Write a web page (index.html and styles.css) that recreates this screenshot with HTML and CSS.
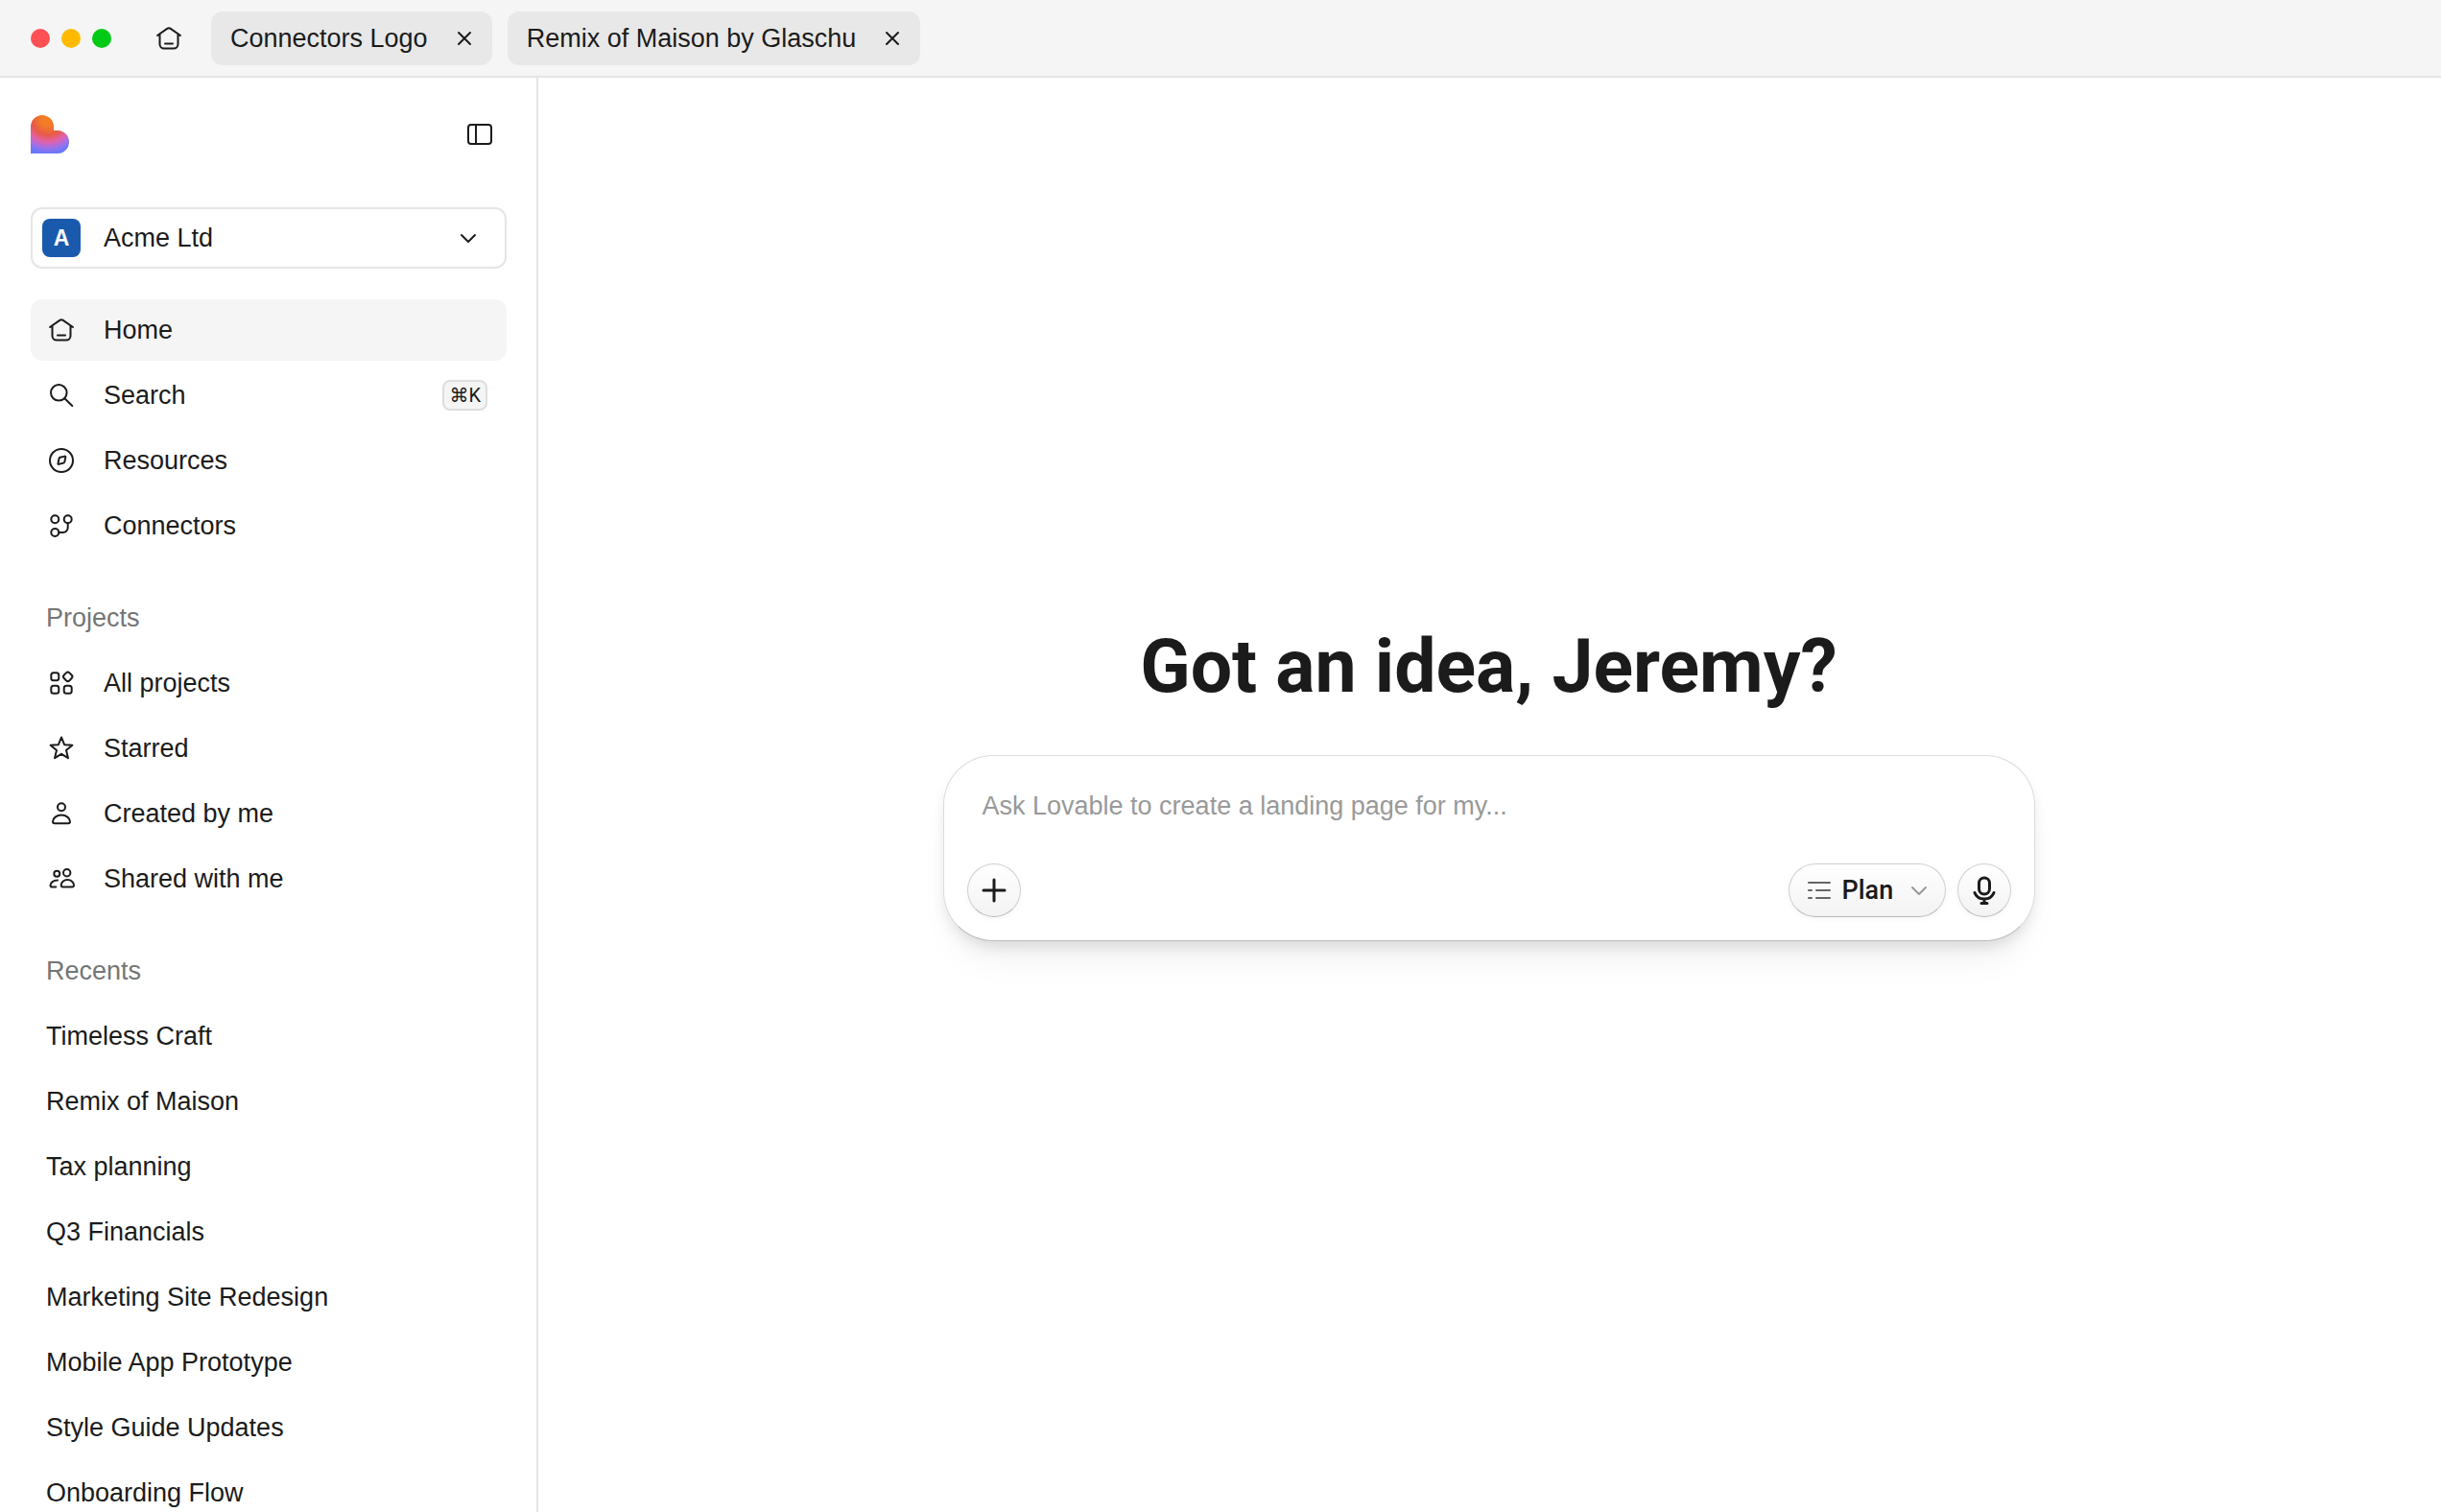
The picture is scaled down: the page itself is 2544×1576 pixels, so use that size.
FILE: index.html
```html
<!DOCTYPE html>
<html lang="en">

<head>
  <meta charset="UTF-8">
  <meta name="viewport" content="width=device-width, initial-scale=1.0">
  <title>Lovable</title>
  <link rel="stylesheet" href="styles.css">
</head>

<body>
  <header class="titlebar">
    <div class="lights">
      <span class="light red"></span>
      <span class="light yellow"></span>
      <span class="light green"></span>
    </div>
    <button class="icon-button home-button" aria-label="Home">
      <svg class="icon" viewBox="0 0 32 32"><path d="M4 13 14.2 5.9Q16 4.7 17.8 5.9L28 13M6.5 11.5V22a4.5 4.5 0 0 0 4.5 4.5h10a4.5 4.5 0 0 0 4.5-4.5V11.5M12 21.5h8"/></svg>
    </button>
    <div class="tabs">
      <div class="tab">
        <a href="#">Connectors Logo</a>
        <button class="icon-button" aria-label="Close Connectors Logo">
          <svg class="icon-small" viewBox="0 0 20 20"><path d="M4 4l12 12M16 4L4 16"/></svg>
        </button>
      </div>
      <div class="tab">
        <a href="#">Remix of Maison by Glaschu</a>
        <button class="icon-button" aria-label="Close Remix of Maison">
          <svg class="icon-small" viewBox="0 0 20 20"><path d="M4 4l12 12M16 4L4 16"/></svg>
        </button>
      </div>
    </div>
  </header>

  <div class="layout">
    <aside class="sidebar">
      <div class="sidebar-top">
        <svg class="logo" viewBox="0 0 40 40" role="img" aria-label="Lovable">
          <defs>
            <radialGradient id="heart" gradientUnits="userSpaceOnUse" cx="18" cy="4" r="42">
              <stop offset="0" stop-color="#f5801f"/>
              <stop offset="0.18" stop-color="#f27a28"/>
              <stop offset="0.4" stop-color="#e85a48"/>
              <stop offset="0.58" stop-color="#e062b0"/>
              <stop offset="0.72" stop-color="#a070e8"/>
              <stop offset="0.85" stop-color="#6a78f8"/>
            </radialGradient>
          </defs>
          <path fill="url(#heart)" d="M0 12a12 12 0 0 1 24 0v4h4a12 12 0 0 1 0 24H0z"/>
        </svg>
        <button class="icon-button" aria-label="Toggle sidebar">
          <svg class="icon" viewBox="0 0 32 32"><rect x="4" y="6" width="24" height="20" rx="3"/><path d="M12 6v20"/></svg>
        </button>
      </div>

      <div class="workspace">
        <span class="avatar">A</span>
        <select aria-label="Workspace">
          <option>Acme Ltd</option>
        </select>
        <svg class="icon-small" viewBox="0 0 20 20"><path d="M3 7l7 7 7-7"/></svg>
      </div>

      <nav class="menu">
        <a href="#" class="item active">
          <svg class="icon" viewBox="0 0 32 32"><path d="M4 13 14.2 5.9Q16 4.7 17.8 5.9L28 13M6.5 11.5V22a4.5 4.5 0 0 0 4.5 4.5h10a4.5 4.5 0 0 0 4.5-4.5V11.5M12 21.5h8"/></svg>
          Home
        </a>
        <a href="#" class="item">
          <svg class="icon" viewBox="0 0 32 32"><circle cx="13.3" cy="13.3" r="8.3"/><path d="M19.3 19.3l8 7.7"/></svg>
          Search
          <kbd>⌘K</kbd>
        </a>
        <a href="#" class="item">
          <svg class="icon" viewBox="0 0 32 32"><circle cx="16" cy="16" r="12"/><path d="M13.6 13.7q.2-.8 1-1l4.8-1.1q1-.2.9.8l-1 5.1q-.2.8-1 1l-5 1.4q-1 .2-.8-.8z"/></svg>
          Resources
        </a>
        <a href="#" class="item">
          <svg class="icon" viewBox="0 0 32 32"><circle cx="9.3" cy="9.3" r="4"/><circle cx="22.7" cy="9.3" r="4"/><circle cx="9.3" cy="23" r="4"/><path d="M22.7 13.3v4.7a5 5 0 0 1-5 5h-4.4"/></svg>
          Connectors
        </a>
      </nav>

      <nav class="menu">
        <h2>Projects</h2>
        <a href="#" class="item">
          <svg class="icon" viewBox="0 0 32 32"><rect x="5.3" y="5.3" width="8" height="8" rx="2.5"/><rect x="18.7" y="5.3" width="8" height="8" rx="2.5" transform="rotate(45 22.7 9.3)"/><rect x="5.3" y="18.7" width="8" height="8" rx="2.5"/><rect x="18.7" y="18.7" width="8" height="8" rx="2.5"/></svg>
          All projects
        </a>
        <a href="#" class="item">
          <svg class="icon" viewBox="0 0 32 32"><path d="M16 4.500l3.100 7.700 8.300.6-6.400 5.300 2 8.100-7-4.400-7 4.400 2-8.100-6.400-5.300 8.300-.6z"/></svg>
          Starred
        </a>
        <a href="#" class="item">
          <svg class="icon" viewBox="0 0 32 32"><circle cx="16" cy="9.3" r="4"/><path d="M16 17.500c-5 0-9 3.300-9 7 0 1.300.8 1.800 2 1.800h14c1.200 0 2-.5 2-1.800 0-3.700-4-7-9-7z"/></svg>
          Created by me
        </a>
        <a href="#" class="item">
          <svg class="icon" viewBox="0 0 32 32"><circle cx="11.3" cy="10.7" r="3"/><circle cx="21.7" cy="9.8" r="3.7"/><path d="M22.300 17c-3.700 0-6.600 2.700-6.600 5.600 0 1.200.7 1.900 1.800 1.900h9.700c1.100 0 1.800-.7 1.800-1.900 0-2.900-3-5.600-6.700-5.600zM12 17.500c-4.300 0-7.500 2.500-7.500 5.200 0 1.200.7 1.800 1.800 1.800h4"/></svg>
          Shared with me
        </a>
      </nav>

      <nav class="menu">
        <h2>Recents</h2>
        <a href="#" class="item">Timeless Craft</a>
        <a href="#" class="item">Remix of Maison</a>
        <a href="#" class="item">Tax planning</a>
        <a href="#" class="item">Q3 Financials</a>
        <a href="#" class="item">Marketing Site Redesign</a>
        <a href="#" class="item">Mobile App Prototype</a>
        <a href="#" class="item">Style Guide Updates</a>
        <a href="#" class="item">Onboarding Flow</a>
      </nav>
    </aside>

    <main class="main">
      <h1>Got an idea, Jeremy?</h1>
      <form class="composer">
        <textarea aria-label="Prompt" placeholder="Ask Lovable to create a landing page for my..."></textarea>
        <div class="actions">
          <button type="button" class="round" aria-label="Add">
            <svg class="icon" viewBox="0 0 32 32"><path d="M16 5v22M5 16h22"/></svg>
          </button>
          <div class="plan">
            <svg class="icon plan-icon" viewBox="0 0 32 32"><path d="M5 8h22M5 16h3M13 16h14M5 24h3M13 24h14"/></svg>
            <select aria-label="Mode">
              <option>Plan</option>
            </select>
            <svg class="icon-small plan-arrow" viewBox="0 0 20 20"><path d="M3 7l7 7 7-7"/></svg>
          </div>
          <button type="button" class="round" aria-label="Dictate">
            <svg class="icon" viewBox="0 0 32 32"><rect x="10.5" y="3" width="11" height="17" rx="5.5"/><path d="M6 18.500c1.500 4 5.300 6.500 10 6.500s8.500-2.500 10-6.500M16 25v4.500M13 29.500h6"/></svg>
          </button>
        </div>
      </form>
    </main>
  </div>
</body>

</html>
```
FILE: styles.css
```css
* {
  box-sizing: border-box;
}

body {
  margin: 0;
  height: 100vh;
  display: flex;
  flex-direction: column;
  overflow: hidden;
  background: #fff;
  color: #1b1b1b;
  font-family: "Liberation Sans", Arial, sans-serif;
  font-size: 27px;
  line-height: 32px;
}

a {
  color: inherit;
  text-decoration: none;
}

button,
select,
textarea {
  font: inherit;
  color: inherit;
}

.icon,
.icon-small {
  display: block;
  flex: none;
  width: 32px;
  height: 32px;
  fill: none;
  stroke: currentColor;
  stroke-width: 2;
  stroke-linecap: round;
  stroke-linejoin: round;
}

.icon-small {
  width: 20px;
  height: 20px;
}

.icon-button {
  padding: 0;
  border: none;
  background: none;
  cursor: pointer;
}

/* Title bar */
.titlebar {
  flex: none;
  display: flex;
  align-items: center;
  height: 81px;
  padding: 0 32px;
  background: #f5f5f5;
  border-bottom: 2px solid #e5e5e5;
}

.lights {
  display: flex;
  gap: 12px;
}

.light {
  width: 20px;
  height: 20px;
  border-radius: 50%;
}

.red {
  background: #ff5056;
}

.yellow {
  background: #ffba00;
}

.green {
  background: #00ca16;
}

.home-button {
  margin: 0 28px 0 44px;
}

.tabs {
  display: flex;
  gap: 16px;
}

.tab {
  display: flex;
  align-items: center;
  gap: 28px;
  height: 56px;
  padding: 0 19px 0 20px;
  border-radius: 12px;
  background: #e8e8e8;
}

/* Sidebar */
.layout {
  flex: 1;
  display: flex;
  min-height: 0;
}

.sidebar {
  flex: none;
  display: flex;
  flex-direction: column;
  gap: 32px;
  width: 561px;
  padding: 39px 31px 0 32px;
  border-right: 2px solid #e5e5e5;
  overflow: hidden;
}

.sidebar-top {
  display: flex;
  justify-content: space-between;
  align-items: center;
  padding-right: 12px;
  margin-bottom: 24px;
}

.logo {
  width: 40px;
  height: 40px;
}

.workspace {
  flex: none;
  display: flex;
  align-items: center;
  height: 64px;
  padding: 0 28px 0 10px;
  border: 2px solid #e5e5e5;
  border-radius: 12px;
}

.avatar {
  width: 40px;
  height: 40px;
  margin-right: 24px;
  border-radius: 8px;
  background: #1a5aad;
  color: #fff;
  font-size: 23px;
  font-weight: 700;
  line-height: 40px;
  text-align: center;
}

select {
  appearance: none;
  padding: 0;
  border: none;
  background: none;
  cursor: pointer;
}

.workspace select {
  flex: 1;
}

.menu {
  display: flex;
  flex-direction: column;
  gap: 4px;
}

.menu h2 {
  margin: 0;
  padding: 16px;
  color: #757575;
  font-size: 27px;
  font-weight: 400;
}

.item {
  display: flex;
  align-items: center;
  gap: 28px;
  height: 64px;
  padding: 0 20px 0 16px;
  border-radius: 12px;
}

.active {
  background: #f5f5f5;
}

kbd {
  margin-left: auto;
  padding: 0 5px;
  border: 2px solid #dedede;
  border-radius: 8px;
  background: #f5f5f5;
  font-family: Roboto, "DejaVu Sans", sans-serif;
  font-size: 20px;
  line-height: 28px;
}

/* Prompt */
.main {
  flex: 1;
  display: flex;
  flex-direction: column;
  align-items: center;
  justify-content: center;
  gap: 48px;
  padding: 0 32px 26px 30px;
}

h1 {
  margin: 0;
  font-family: Roboto, sans-serif;
  font-size: 77px;
  font-weight: 700;
  line-height: 88px;
}

.composer {
  width: 100%;
  max-width: 1138px;
  padding: 24px;
  border: 1px solid #dcdcdc;
  border-bottom-color: #bdbdbd;
  border-radius: 52px;
  background: #fff;
  box-shadow: 0 8px 16px -4px rgba(0, 0, 0, 0.12), 0 28px 40px -16px rgba(0, 0, 0, 0.08);
}

textarea {
  display: block;
  width: 100%;
  height: 88px;
  padding: 12px 16px;
  border: none;
  outline: none;
  resize: none;
  background: none;
}

textarea::placeholder {
  color: #999;
  opacity: 1;
}

.actions {
  display: flex;
  gap: 12px;
}

.round,
.plan {
  display: flex;
  align-items: center;
  justify-content: center;
  height: 56px;
  border: 1px solid #cfcfcf;
  border-bottom-color: #b8b8b8;
  border-radius: 28px;
  background: linear-gradient(#fff, #f3f3f3);
  box-shadow: 0 2px 6px rgba(0, 0, 0, 0.04);
  cursor: pointer;
}

.round {
  width: 56px;
  padding: 0;
}

.round .icon {
  stroke-width: 3;
}

.plan {
  gap: 8px;
  margin-left: auto;
  padding: 0 17px 0 15px;
  font-family: Roboto, sans-serif;
  font-weight: 500;
}

.plan-icon {
  color: #666;
}

.plan-arrow {
  color: #999;
  margin-left: 8px;
}
```
